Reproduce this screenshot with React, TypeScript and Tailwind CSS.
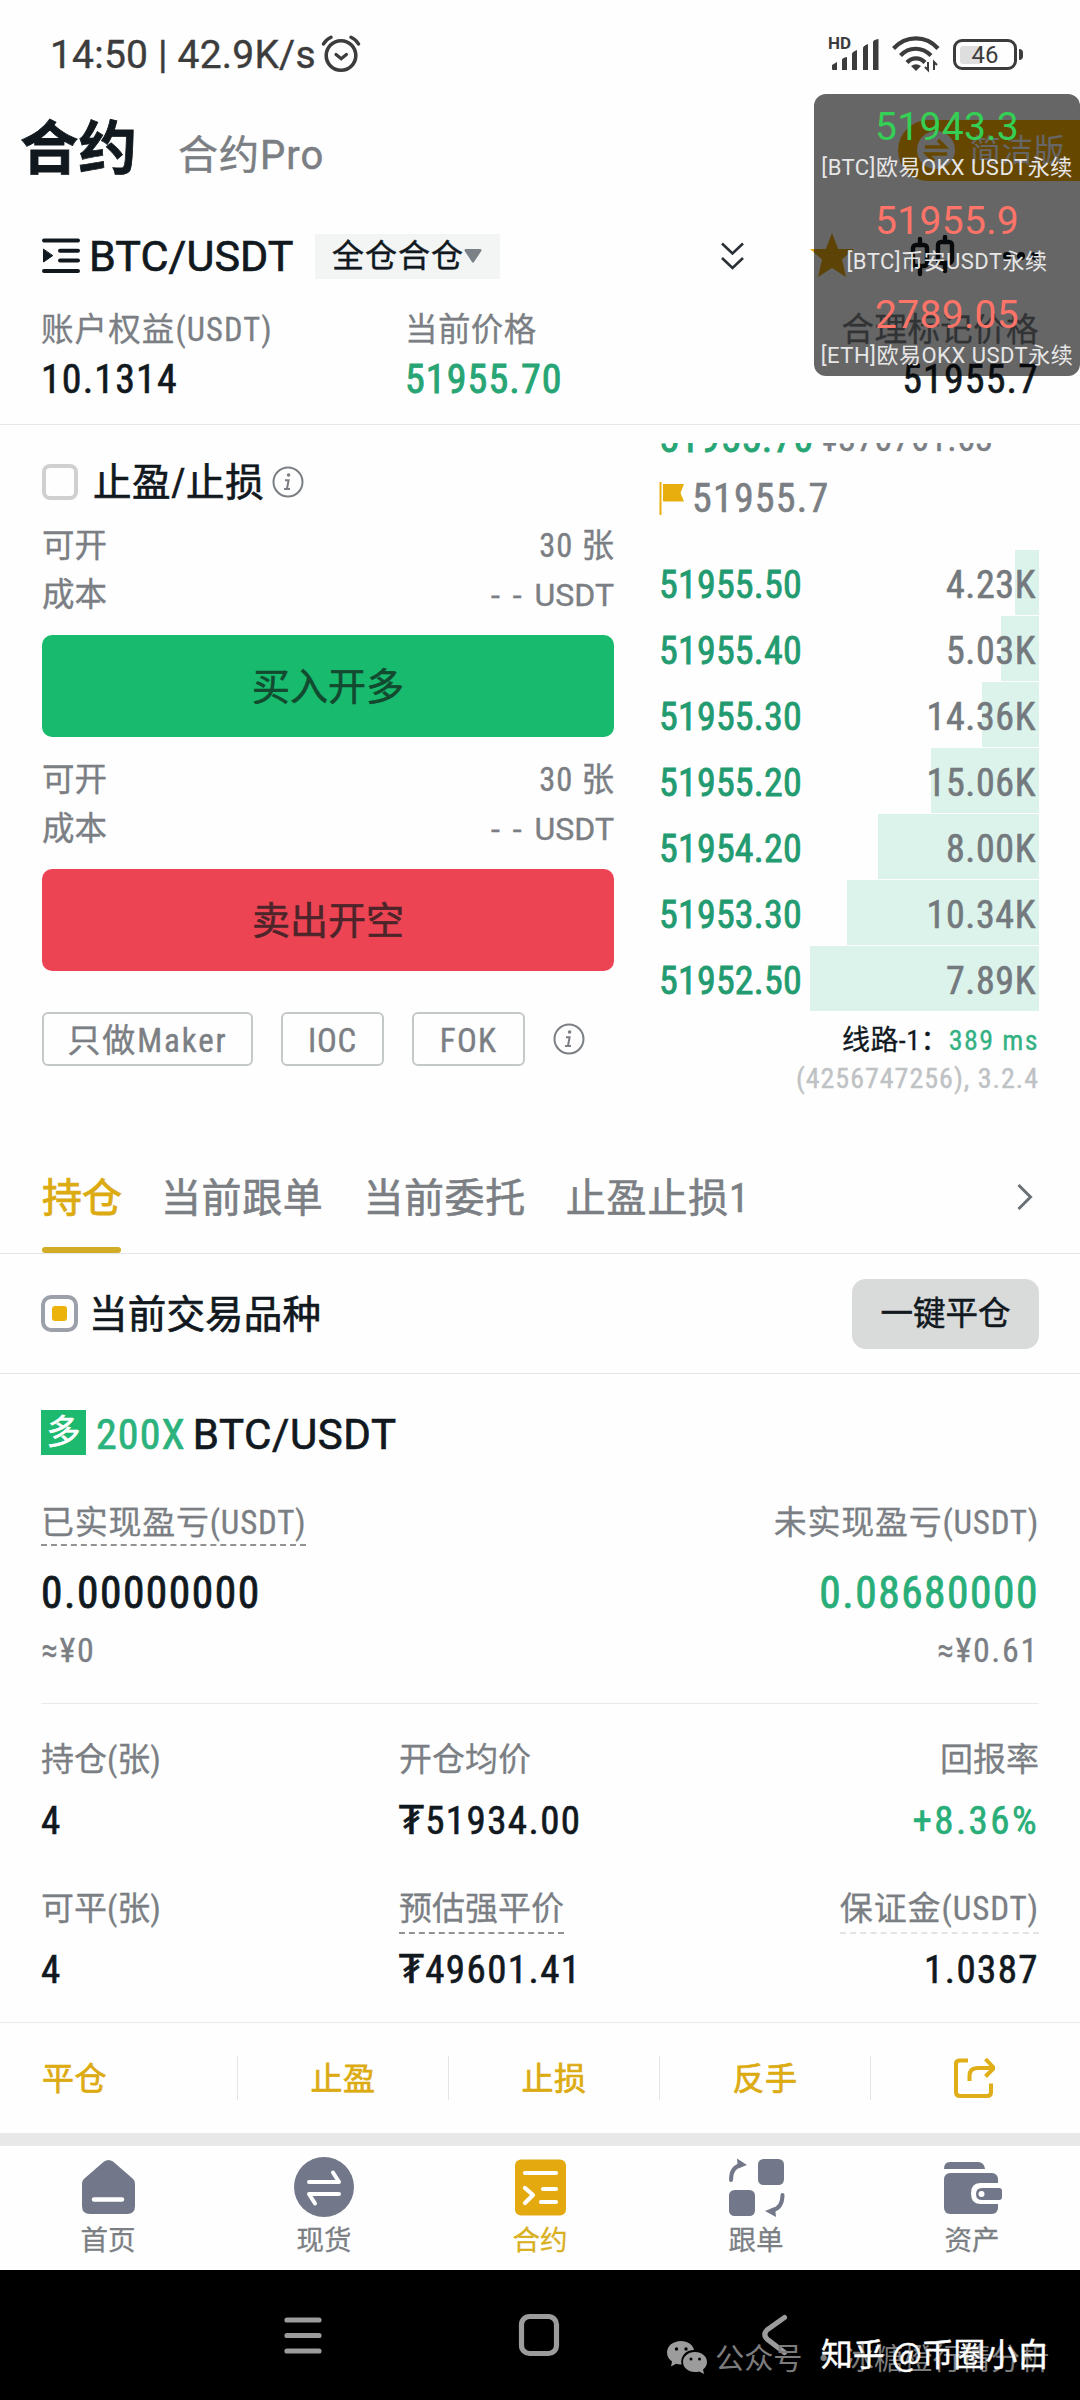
import { type ReactNode } from "react";
import { clsx } from "clsx";

const bids = [
    { price: "51955.50", amount: "4.23K", depth: 24 },
    { price: "51955.40", amount: "5.03K", depth: 38 },
    { price: "51955.30", amount: "14.36K", depth: 57 },
    { price: "51955.20", amount: "15.06K", depth: 108 },
    { price: "51954.20", amount: "8.00K", depth: 161 },
    { price: "51953.30", amount: "10.34K", depth: 192 },
    { price: "51952.50", amount: "7.89K", depth: 229 },
];

const tickers = [
    { price: "51943.3", label: "[BTC]欧易OKX USDT永续", up: true },
    { price: "51955.9", label: "[BTC]币安USDT永续", up: false },
    { price: "2789.05", label: "[ETH]欧易OKX USDT永续", up: false },
];

function InfoIcon() {
    return (
        <svg className="w-8 h-8" viewBox="0 0 32 32" fill="none" stroke="#7b7f84" strokeWidth="2">
            <circle cx="16" cy="16" r="14.5" />
            <circle cx="16.6" cy="9" r="1.8" fill="#7b7f84" stroke="none" />
            <path d="M13 14.2h3.6L15 22.8M12 23h6" />
        </svg>
    );
}

function StatusBar() {
    return (
        <div className="flex h-[108px] items-center justify-between pl-[50px] pr-[57px] font-['Roboto'] text-[39px] text-[#3c3c3c]">
            <div className="flex items-center gap-[5px]">
                <span className="pt-[2px] tracking-[0.2px] [-webkit-text-stroke:0.4px]">14:50 | 42.9K/s</span>
                <svg className="h-[38px] w-[40px]" viewBox="0 0 40 38" fill="none" stroke="#3c3c3c" strokeWidth="3.6" strokeLinecap="round">
                    <circle cx="20" cy="20.5" r="14.8" />
                    <path d="M2.5 9C4 6 7 3.5 10 2.2M37.5 9C36 6 33 3.5 30 2.2" strokeWidth="3.4" />
                    <path d="M15 19.5l5.2 4.2 5.2-4.2" strokeWidth="3.2" />
                </svg>
            </div>
            <div className="flex items-center">
                <svg className="h-[40px] w-[54px]" viewBox="-2 -2 54 40" fill="#3c3c3c">
                    <text x="-1" y="12.5" fontFamily="Roboto" fontSize="17" fontWeight="700">HD</text>
                    <path d="M3 29l5-3v8H4q-1 0-1-1zM13 24q0-2 5-3v13h-5zM23 18q0-2 5-4v20h-5zM34 12q0-2 5-4v26h-5zM44 6q0-2 5.5-3v31H44z" />
                </svg>
                <svg className="ml-[11px] h-[38px] w-[48px]" viewBox="0 0 48 38" fill="none" stroke="#3c3c3c" strokeWidth="4.2">
                    <path d="M1.5 13.5C14 0 34 0 46 13.5M8.5 20.5C17 11.5 30 11.5 39 20.5M15 27.5C20 22 28 22 33 27.5" />
                    <path d="M19 31q5-3.5 10 0l-5 5z" fill="#3c3c3c" stroke="none" />
                    <path d="M36 27v8l-3-3M42 35v-8l3 3" strokeWidth="2" />
                </svg>
                <div className="relative ml-[13px] flex h-[31px] w-[64px] items-center justify-center rounded-[9px] border-[3px] border-[#3c3c3c]">
                    <div className="absolute left-[4px] top-[4px] h-[18px] w-[22px] rounded-[3px] bg-[#dedede]" />
                    <span className="relative pt-px text-[24px] leading-none">46</span>
                </div>
                <div className="ml-[2px] h-[11px] w-[4px] rounded-r-sm bg-[#3c3c3c]" />
            </div>
        </div>
    );
}

function Header() {
    return (
        <header className="border-b border-[#e6e8e8] pb-[19px]">
            <StatusBar />
            <div className="flex h-[78px] items-center pl-[20px]">
                <span className="pt-[4px] text-[58.5px] font-bold leading-none [-webkit-text-stroke:0.8px]">合约</span>
                <span className="ml-[41px] pt-[17px] font-['Roboto','Noto_Sans_CJK_SC',sans-serif] text-[40px] leading-none tracking-[1px] text-[#7b7f84] [-webkit-text-stroke:0.5px]">合约Pro</span>
                <div className="ml-auto mt-[6px] flex h-[61px] w-[182px] items-center rounded-l-full bg-[#ffb200] pl-[18px]">
                    <svg className="h-[40px] w-[40px]" viewBox="0 0 40 40">
                        <circle cx="20" cy="20" r="19" fill="#fff" />
                        <path d="M9 17h20l-7-7M31 24H11l7 7" fill="none" stroke="#ffb200" strokeWidth="3.5" />
                    </svg>
                    <span className="ml-[14px] whitespace-nowrap text-[31px] leading-none tracking-[0.8px] text-white">简洁版</span>
                </div>
            </div>

            <div className="mt-[32px] flex h-[76px] items-center pl-[42px]">
                <svg className="h-[36px] w-[38px]" viewBox="0 0 38 36" fill="none" stroke="#11191f" strokeWidth="4" strokeLinecap="round">
                    <path d="M2 2.5h34M18 12.8h18M18 22.5h18M2 33h34" />
                    <path d="M1.5 11.5v12.5l9-6.2z" fill="#11191f" strokeWidth="1" strokeLinejoin="round" />
                </svg>
                <span className="ml-[9px] w-[206px] font-['Roboto'] text-[43px] leading-none tracking-[0.1px] [-webkit-text-stroke:0.7px]">BTC/USDT</span>
                <div className="ml-[20px] flex h-[45px] w-[185px] items-center bg-[#f3f5f5] pl-[17px]">
                    <span className="text-[32px] leading-none tracking-[1px] [-webkit-text-stroke:0.4px]">全仓合仓</span>
                    <svg className="h-[14px] w-[18px]" viewBox="0 0 18 14" fill="#7a8288">
                        <path d="M1.5 0h15q1.5.5.8 2L10 13q-1 1.5-2 0L.7 2Q0 .5 1.5 0z" />
                    </svg>
                </div>
                <svg className="ml-[221px] h-[28px] w-[23px]" viewBox="0 0 23 28" fill="none" stroke="#2a3136" strokeWidth="2.6">
                    <path d="M1 1.5l10.5 10L22 1.5M1 16l10.5 10L22 16" />
                </svg>
                <svg className="ml-[66px] h-[46px] w-[46px]" viewBox="0 0 46 46" fill="#e9ab10">
                    <path d="M22 0l6.2 16H44L32 26.5 36 44 22 35 8 44l4-17.5L0 16h15.8z" />
                </svg>
                <svg className="ml-[54px] h-[42px] w-[46px]" viewBox="0 0 46 42" fill="none" stroke="#11191f" strokeWidth="4.4" strokeLinecap="round">
                    <rect x="3" y="10" width="14" height="21" rx="3" />
                    <path d="M10 4v6M10 31v8M35 2v5M35 28v8" />
                    <rect x="28" y="7" width="14" height="21" rx="3" />
                </svg>
                <svg className="ml-[47px] h-[8px] w-[36px]" viewBox="0 0 36 8" fill="#11191f">
                    <circle cx="4" cy="4" r="4" />
                    <circle cx="18" cy="4" r="4" />
                    <circle cx="32" cy="4" r="4" />
                </svg>
            </div>

            <div className="mt-[15px] flex pl-[41px] pr-[41px]">
                <Stat className="w-[364px]" label="账户权益(USDT)" labelClass="tracking-[1.1px]" value="10.1314" />
                <Stat label="当前价格" value="51955.70" valueClass="text-[#27a574] [-webkit-text-stroke:0.9px]" />
                <Stat className="ml-auto text-right" label="合理标记价格" value="51955.7" />
            </div>
        </header>
    );
}

type StatProps = { label: string; value: string; className?: string; labelClass?: string; valueClass?: string };

function Stat({ label, value, className, labelClass, valueClass }: StatProps) {
    return (
        <div className={className}>
            <div className={clsx("text-[32.5px] leading-[43px] text-[#7b7f84] [-webkit-text-stroke:0.3px]", labelClass ?? "tracking-[0.4px]")}>{label}</div>
            <div className={clsx("mt-[3px] text-[40px] leading-[50px] tracking-[1.1px]", valueClass ?? "[-webkit-text-stroke:0.6px]")}>{value}</div>
        </div>
    );
}

// Floating price widget that sits over the page header
function PriceOverlay() {
    return (
        <div className="absolute right-0 top-[94px] h-[282px] w-[266px] rounded-xl bg-black/60 pt-[10px] text-center font-['Roboto','Noto_Sans_CJK_SC',sans-serif]">
            {tickers.map((t) => (
                <div key={t.label} className="h-[94px]">
                    <div className={clsx("text-[39px] leading-[46px] tracking-[0.3px]", t.up ? "text-[#35cf55]" : "text-[#ff7468]")}>{t.price}</div>
                    <div className="whitespace-nowrap text-[22px] leading-[36px] tracking-[0.5px] text-[#e6e6e6]">{t.label}</div>
                </div>
            ))}
        </div>
    );
}

function OrderSide({ label, color }: { label: string; color: string }) {
    return (
        <div className="text-[32.5px] text-[#7b7f84]">
            <div className="flex h-[49px] items-center justify-between pt-[3px] [-webkit-text-stroke:0.4px]">
                <span>可开</span>
                <span>
                    <span className="tracking-[0.9px]">30 </span>张
                </span>
            </div>
            <div className="flex h-[49px] items-center justify-between pt-[3px] [-webkit-text-stroke:0.4px]">
                <span>成本</span>
                <span className="font-['Roboto'] text-[32px] [word-spacing:5px]">- - USDT</span>
            </div>
            <button className={clsx("mt-[17px] flex h-[102px] w-full items-center justify-center rounded-[10px] pt-[2px] text-[38px] [-webkit-text-stroke:0.6px]", color)}>
                {label}
            </button>
        </div>
    );
}

function OrderForm() {
    return (
        <div className="w-[572px] pt-[32px]">
            <div className="flex h-[50px] items-center">
                <div className="h-[36px] w-[36px] rounded-lg border-[4px] border-[#d0d0d0]" />
                <span className="ml-[15px] mr-[8px] pt-[2px] text-[38.5px] leading-none tracking-[0.6px] [-webkit-text-stroke:0.7px]">止盈/止损</span>
                <InfoIcon />
            </div>
            <div className="mt-[13px]">
                <OrderSide label="买入开多" color="bg-[#18ba6e] text-[#12492f]" />
            </div>
            <div className="mt-[17px]">
                <OrderSide label="卖出开空" color="bg-[#ed4453] text-[#4c242a]" />
            </div>
            <div className="mt-[41px] flex h-[54px] items-center text-[33px] text-[#7b7f84] [-webkit-text-stroke:0.4px]">
                <Chip className="w-[211px] tracking-[1.9px]">只做Maker</Chip>
                <Chip className="ml-[28px] w-[103px] tracking-[0.8px]">IOC</Chip>
                <Chip className="ml-[28px] mr-[28px] w-[113px] tracking-[1.2px]">FOK</Chip>
                <InfoIcon />
            </div>
        </div>
    );
}

function Chip({ children, className }: { children: ReactNode; className?: string }) {
    return (
        <div className={clsx("flex h-full items-center justify-center rounded-[6px] border-2 border-[#c4c8c8] pt-[3px] leading-none", className)}>
            {children}
        </div>
    );
}

function OrderBook() {
    return (
        <div className="ml-[45px] w-[380px] pt-[18px]">
            {/* Last price line, scrolled mostly out of view */}
            <div className="flex h-[11px] items-end gap-[7px] overflow-hidden leading-[30px]">
                <span className="text-[40px] tracking-[0.8px] text-[#27a574] [-webkit-text-stroke:0.9px]">51955.70</span>
                <span className="text-[36px] tracking-[0.4px] text-[#7b7f84] [-webkit-text-stroke:0.4px]">¥370761.63</span>
            </div>
            <div className="mt-[18px] flex h-[52px] items-center text-[40px] text-[#7b7f84]">
                <svg className="mr-[7px] h-[33px] w-[26px]" viewBox="0 0 26 33" fill="#e8ae0e">
                    <path d="M.5 0h2v33h-2zM4 2h21l-3.5 9L25 19.5H4z" />
                </svg>
                <span className="pt-[2px] tracking-[1.2px] [-webkit-text-stroke:0.6px]">51955.7</span>
            </div>
            <div className="mt-[26px]">
                {bids.map((bid) => (
                    <div key={bid.price} className="relative flex h-[66px] items-center justify-between pr-[3px] pt-[4px] text-[38px]">
                        <div className="absolute right-0 top-0 h-[65px] bg-[#dcf3eb]" style={{ width: bid.depth }} />
                        <span className="relative tracking-[0.2px] text-[#229b70] [-webkit-text-stroke:0.8px]">{bid.price}</span>
                        <span className="relative tracking-[0.6px] text-[#73797d] [-webkit-text-stroke:0.6px]">{bid.amount}</span>
                    </div>
                ))}
            </div>
            <div className="mt-[10px] flex h-[38px] items-center justify-end text-[28px] [-webkit-text-stroke:0.3px]">
                <span className="tracking-[0.4px]">线路-1：</span>
                <span className="tracking-[1.4px] text-[#34b183]">389 ms</span>
            </div>
            <div className="h-[40px] text-right text-[28px] leading-[38px] tracking-[1px] text-[#bfc2c4] [-webkit-text-stroke:0.4px]">(4256747256), 3.2.4</div>
        </div>
    );
}

function Tabs() {
    return (
        <nav className="flex h-[99px] whitespace-nowrap border-b border-[#e3e6e6] pl-[42px] pr-[46px] text-[40px] leading-[87px] text-[#7b7f84] [-webkit-text-stroke:0.6px]">
            <div className="h-[98px] w-[80px] text-[#dcab12] [-webkit-text-stroke:0.9px]">
                持仓
                <div className="mt-[5px] h-[6px] w-[79px] rounded-[3px] bg-[#d3ac27]" />
            </div>
            <span className="ml-[39px] tracking-[0.6px]">当前跟单</span>
            <span className="ml-[40px] tracking-[0.6px]">当前委托</span>
            <span className="ml-[40px] tracking-[0.8px]">止盈止损1</span>
            <svg className="ml-auto mt-[28px] h-[28px] w-[18px]" viewBox="0 0 18 28" fill="none" stroke="#6b7075" strokeWidth="3">
                <path d="M2.5 2l12 12-12 12" />
            </svg>
        </nav>
    );
}

type FieldProps = { label: string; value: string; className?: string; labelClass?: string; valueClass?: string };

function Field({ label, value, className, labelClass, valueClass }: FieldProps) {
    return (
        <div className={className}>
            <div className={clsx("inline-block h-[47px] border-b-2 border-dashed text-[33px] leading-[44px] text-[#7b7f84] [-webkit-text-stroke:0.3px]", labelClass ?? "border-transparent")}>{label}</div>
            <div className={clsx("mt-[11px] text-[39px] leading-[50px] [-webkit-text-stroke:0.6px]", valueClass ?? "tracking-[1.4px]")}>{value}</div>
        </div>
    );
}

function Position() {
    return (
        <section>
            <div className="flex h-[120px] items-center justify-between border-b border-[#e3e6e6] pl-[41px] pr-[41px]">
                <div className="flex items-center gap-[11px]">
                    <div className="flex h-[37px] w-[37px] items-center justify-center rounded-[10px] border-[4px] border-[#9ba0a9]">
                        <div className="h-[15px] w-[15px] rounded-[3px] bg-[#ecb30c]" />
                    </div>
                    <span className="pt-[3px] text-[38.5px] leading-none tracking-[0.2px] [-webkit-text-stroke:0.7px]">当前交易品种</span>
                </div>
                <button className="flex h-[70px] w-[187px] items-center justify-center rounded-[14px] bg-[#d9dada] pt-[2px] text-[32.5px] [-webkit-text-stroke:0.5px]">一键平仓</button>
            </div>

            <div className="px-[41px] pt-[28px]">
                <div className="flex h-[60px] items-center text-[42px] leading-none">
                    <span className="flex h-[45px] w-[45px] items-center justify-center bg-[#1cb96f] text-[34px] text-white [-webkit-text-stroke:0.6px]">多</span>
                    <span className="ml-[10px] pt-[5px] tracking-[1.1px] text-[#2cb27c] [-webkit-text-stroke:0.7px]">200X</span>
                    <span className="ml-[7px] pt-[5px] font-['Roboto'] tracking-[0.6px] [-webkit-text-stroke:0.7px]">BTC/USDT</span>
                </div>
                <div className="mt-[39px] flex justify-between text-[33px] leading-[44px] tracking-[0.75px] text-[#7b7f84] [-webkit-text-stroke:0.3px]">
                    <span className="h-[45px] border-b-2 border-dashed border-[#8f9396]">已实现盈亏(USDT)</span>
                    <span>未实现盈亏(USDT)</span>
                </div>
                <div className="mt-[18px] flex justify-between text-[43.5px] leading-[60px] tracking-[1.5px] [-webkit-text-stroke:0.8px]">
                    <span>0.00000000</span>
                    <span className="text-[#2aae79]">0.08680000</span>
                </div>
                <div className="mt-[6px] flex justify-between text-[34px] leading-[40px] tracking-[1.7px] text-[#7b7f84] [-webkit-text-stroke:0.3px]">
                    <span>≈¥0</span>
                    <span>≈¥0.61</span>
                </div>
                <div className="mt-[33px] border-t border-[#e8eaea]" />
            </div>

            <div className="flex px-[41px] pt-[34px]">
                <Field className="w-[358px]" label="持仓(张)" value="4" />
                <Field label="开仓均价" value="₮51934.00" />
                <Field className="ml-auto text-right" label="回报率" value="+8.36%" valueClass="tracking-[2.4px] text-[#2aae79]" />
            </div>
            <div className="mt-[41px] flex px-[41px]">
                <Field className="w-[358px]" label="可平(张)" value="4" />
                <Field label="预估强平价" value="₮49601.41" labelClass="border-[#8f9396]" />
                <Field className="ml-auto text-right" label="保证金(USDT)" value="1.0387" labelClass="border-[#e2e4e4] tracking-[0.9px]" />
            </div>
        </section>
    );
}

function Actions() {
    return (
        <div className="mt-[27px] flex h-[111px] items-center border-t border-[#e8eaea] text-[32px] leading-none tracking-[0.5px] text-[#dcab12] [-webkit-text-stroke:0.7px]">
            <span className="w-[237px] pl-[42px] pt-[2px]">平仓</span>
            {["止盈", "止损", "反手"].map((name) => (
                <span key={name} className="flex h-[44px] w-[211px] items-center justify-center border-l border-[#e4e6e6] pt-[2px]">{name}</span>
            ))}
            <div className="flex h-[44px] flex-1 items-center justify-center border-l border-[#e4e6e6] pr-[4px]">
                <svg className="h-[42px] w-[42px]" viewBox="0 0 42 42" fill="none" stroke="#dfae18" strokeWidth="4">
                    <path d="M15 3.5H6.5Q3 3.5 3 7v28q0 4 4 4h27q4 0 4-4V26.5" />
                    <path d="M16.5 24v-5q0-8 8-8H39M32.5 2l8.5 9-8.5 8.5" />
                </svg>
            </div>
        </div>
    );
}

const navItems = [
    {
        label: "首页",
        icon: (
            <>
                <path d="M4 27q0-4 3-6L26 4.5q4.5-3 9 0L54 21q3 2 3 6v22q0 8-8 8H12q-8 0-8-8z" />
                <path d="M16 42.5h28" stroke="#fff" strokeWidth="4.5" strokeLinecap="round" />
            </>
        ),
    },
    {
        label: "现货",
        icon: (
            <>
                <circle cx="30" cy="30" r="30" />
                <path d="M15 25h30L39 15.5M45 37H15l6 9.5" fill="none" stroke="#fff" strokeWidth="4" strokeLinecap="round" strokeLinejoin="round" />
            </>
        ),
    },
    {
        label: "合约",
        active: true,
        icon: (
            <>
                <rect x="5" y="2.5" width="51" height="56" rx="6" />
                <path d="M15 16h31M33 32h13M31 45h15M15 31l8 7-8 8" fill="none" stroke="#fff" strokeWidth="4.2" strokeLinecap="round" strokeLinejoin="round" />
            </>
        ),
    },
    {
        label: "跟单",
        icon: (
            <>
                <rect x="32" y="2" width="26" height="26" rx="5.5" />
                <rect x="3" y="33" width="26" height="26" rx="5.5" />
                <path d="M5 23Q5 10 15 8M56.5 38Q56.5 51 46 53.5" fill="none" stroke="#727889" strokeWidth="4" strokeLinecap="round" />
                <path d="M11 1.5L21 8l-9 3.5zM50 60l-11-6 10-4z" />
            </>
        ),
    },
    {
        label: "资产",
        icon: (
            <>
                <path d="M2 12q0-7 6-7h28q6 0 7 7z" />
                <rect x="2" y="16" width="54" height="41" rx="6" />
                <path d="M62 26H38q-9 0-9 10.5T38 47h24z" fill="#fff" />
                <path d="M57 31q3 0 3 3v6q0 3-3 3H40q-6 0-6-6t6-6z" />
                <circle cx="39.5" cy="37" r="3" fill="#fff" />
            </>
        ),
    },
];

function BottomNav() {
    return (
        <nav className="flex h-[137px] border-t-[13px] border-[#e8e8e8] pt-[11px]">
            {navItems.map((item) => (
                <div key={item.label} className={clsx("flex w-[216px] flex-col items-center", item.active ? "text-[#d9b021]" : "text-[#7b7f84]")}>
                    <svg className={clsx("h-[60px] w-[60px]", item.active ? "fill-[#e3a90f]" : "fill-[#727889]")} viewBox="0 0 60 60">
                        {item.icon}
                    </svg>
                    <span className="mt-[4px] text-[27.5px] leading-[40px] [-webkit-text-stroke:0.3px]">{item.label}</span>
                </div>
            ))}
        </nav>
    );
}

function SystemBar() {
    return (
        <div className="relative h-[130px] bg-black">
            <svg className="h-[130px] w-full" viewBox="0 0 1080 130" fill="none" stroke="#9c9c9c" strokeWidth="5.2" strokeLinecap="round">
                <path d="M287 50h32M287 65.5h32M287 81h32" />
                <rect x="521.5" y="46.5" width="35" height="37" rx="8" />
                <path d="M784.5 47.5L767 60q-4.5 4.5 0 9l17.5 13.5" />
                {/* Chat bubbles */}
                <g fill="#9c9c9c" stroke="none">
                    <path d="M681 71c-8 0-14 5-14 11.5 0 4 2 7 5 9l-1 5 5-2.7c2 .6 4 .7 5.5.6C680 86 686 80 694 80c-1-5.5-6.5-9-13-9z" />
                    <path d="M695 82c-7 0-12 4.5-12 10s5 10 12 10c1.5 0 3-.2 4.3-.6l4.7 2.6-1-4.5c2.5-2 4-4.5 4-7.5 0-5.5-5-10-12-10z" />
                    <g fill="#000">
                        <circle cx="676.5" cy="79" r="1.7" />
                        <circle cx="686" cy="79" r="1.7" />
                        <circle cx="691" cy="89" r="1.5" />
                        <circle cx="699.5" cy="89" r="1.5" />
                    </g>
                </g>
            </svg>
            <span className="absolute left-[715px] top-[66px] whitespace-nowrap font-['Noto_Sans_CJK_SC',sans-serif] text-[29.2px] leading-[40px] text-[#7c7c7c]">公众号 · 冰糖橙行情分析</span>
            <span className="absolute left-[821px] top-[62px] whitespace-nowrap font-['Noto_Sans_CJK_SC',sans-serif] text-[31.8px] leading-[40px] text-white [-webkit-text-stroke:0.4px]">知乎 @币圈小白</span>
        </div>
    );
}

export default function App() {
    return (
        <div className="relative h-[2400px] w-[1080px] overflow-hidden bg-[#fefefe] font-['Roboto_Condensed','Noto_Sans_CJK_SC','DejaVu_Sans',sans-serif] text-[#11191f]">
            <Header />
            <main className="flex h-[730px] pl-[42px]">
                <OrderForm />
                <OrderBook />
            </main>
            <Tabs />
            <Position />
            <Actions />
            <BottomNav />
            <SystemBar />
            <PriceOverlay />
        </div>
    );
}
